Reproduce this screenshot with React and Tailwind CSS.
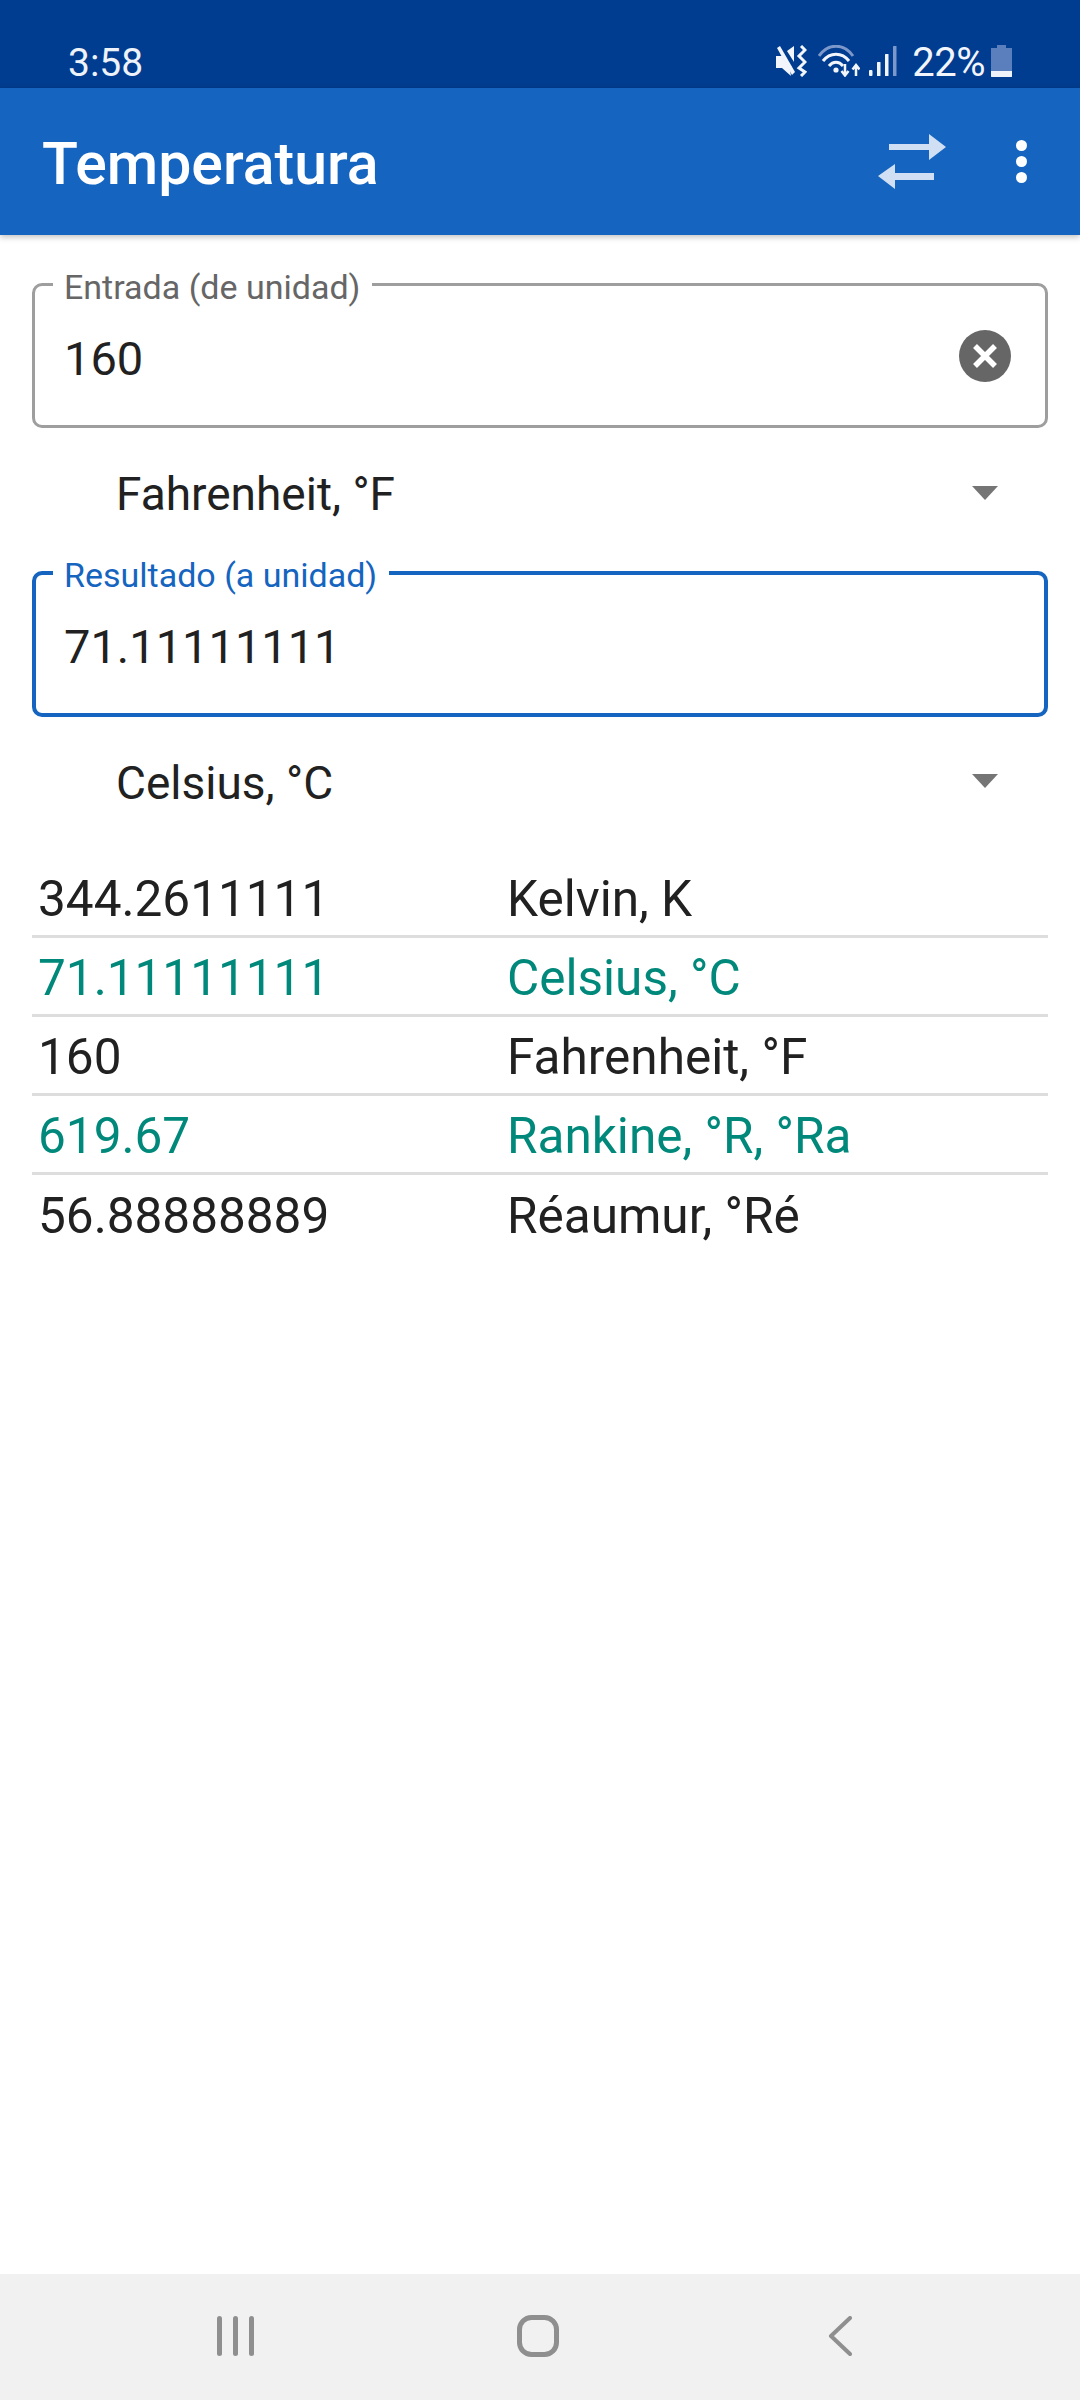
import React from "react";

const rows = [
  { value: "344.2611111", unit: "Kelvin, K" },
  { value: "71.11111111", unit: "Celsius, °C", accent: true },
  { value: "160", unit: "Fahrenheit, °F" },
  { value: "619.67", unit: "Rankine, °R, °Ra", accent: true },
  { value: "56.88888889", unit: "Réaumur, °Ré" },
];

const StatusIcons = () => (
  <div className="flex items-center">
    {/* mute + vibrate off */}
    <svg width="31" height="32" viewBox="0 0 31 32" className="mb-[4px]">
      <path d="M1 3 L4 1 L19 27 L16 30 Z" fill="#f2f5fb" />
      <path d="M0 11 H6 L14 25 L15 31 L6 23 H0 Z" fill="#f2f5fb" />
      <path d="M11 6 L18 1 V17 Z" fill="#f2f5fb" />
      <path d="M25 1 L29 5 L23 11 L29 17 L23 23 L29 27 L25 31" fill="none" stroke="#f2f5fb" strokeWidth="3" />
    </svg>
    {/* wifi */}
    <svg width="42" height="32" viewBox="0 0 42 32" className="mb-[4px] ml-[11px]">
      <path d="M1 11 C10 -2 26 -2 35 11" fill="none" stroke="#7c97c9" strokeWidth="3" />
      <path d="M5 16 C12 7 24 7 31 16" fill="none" stroke="#f2f5fb" strokeWidth="3" />
      <path d="M11 21 C15 16 21 16 25 21" fill="none" stroke="#f2f5fb" strokeWidth="3" />
      <circle cx="18" cy="25" r="2.6" fill="#f2f5fb" />
      <path d="M27 19 V29 M23.5 26 L27 30.5 L30.5 26" fill="none" stroke="#f2f5fb" strokeWidth="2.5" />
      <path d="M38 31 V21 M34.5 24.5 L38 20 L41.5 24.5" fill="none" stroke="#f2f5fb" strokeWidth="2.5" />
    </svg>
    {/* signal */}
    <svg width="28" height="32" viewBox="0 0 28 32" className="mb-[4px] ml-[9px]">
      <rect x="0" y="25" width="3.5" height="6" rx="1" fill="#f2f5fb" />
      <rect x="8" y="17" width="3.5" height="14" rx="0.5" fill="#f2f5fb" />
      <rect x="16" y="9" width="3.5" height="22" rx="0.5" fill="#f2f5fb" />
      <rect x="24" y="1" width="3.5" height="30" rx="0.5" fill="#7c97c9" />
    </svg>
    <span className="ml-[15px] text-[40px] leading-none tracking-[-0.5px] text-[#f2f5fb]">22%</span>
    {/* battery */}
    <svg width="21" height="32" viewBox="0 0 21 32" className="mb-[4px] ml-[6px]">
      <path d="M6 0 H15 V3 H21 V32 H0 V3 H6 Z" fill="#5b7fbd" />
      <path d="M0 26 H21 V31 C21 31.6 20.6 32 20 32 H1 C0.4 32 0 31.6 0 31 Z" fill="#eef2f9" />
    </svg>
  </div>
);

const Caret = () => (
  <svg width="26" height="14" viewBox="0 0 26 14" className="mb-[3px] mr-[50px]">
    <path d="M0 0 H26 L13 14 Z" fill="#757575" />
  </svg>
);

const UnitSelect = ({ label, height }) => (
  <div className={`flex items-center justify-between pb-[11px] pl-[84px] ${height}`}>
    <span className="text-[46px] leading-none text-[#212121]">{label}</span>
    <Caret />
  </div>
);

export default function App() {
  return (
    <div
      className="flex h-[2400px] w-[1080px] flex-col bg-white"
      style={{ fontFamily: "Roboto, sans-serif" }}
    >
      {/* status bar */}
      <div className="flex h-[88px] items-end justify-between bg-[#003c8f] pb-[5px] pl-[68px] pr-[68px]">
        <span className="text-[39px] leading-none text-[#eef2f9]">3:58</span>
        <StatusIcons />
      </div>

      {/* app bar */}
      <div className="flex h-[147px] items-center justify-between bg-[#1565c0] pl-[42px] pr-[53px] shadow-[0_2px_6px_rgba(0,0,0,0.25)]">
        <span className="mt-[3px] text-[59px] font-medium leading-none text-white">Temperatura</span>
        <div className="flex items-center gap-[70px]">
          <svg width="68" height="55" viewBox="0 0 68 55" fill="#d0dff4">
            <path d="M11 10 H51 V0 L68 13 L51 26 V16 H11 Z" />
            <path d="M56 39 H17 V30 L0 42 L17 55 V46 H56 Z" />
          </svg>
          <div className="flex flex-col gap-[5px]">
            <div className="h-[11px] w-[11px] rounded-full bg-white" />
            <div className="h-[11px] w-[11px] rounded-full bg-white" />
            <div className="h-[11px] w-[11px] rounded-full bg-white" />
          </div>
        </div>
      </div>

      <div className="flex flex-1 flex-col px-8 pt-12">
        {/* input field */}
        <div className="relative flex h-[145px] items-center justify-between rounded-[10px] border-[3px] border-[#9e9e9e] pl-[29px] pr-[34px]">
          <span className="absolute left-[18px] top-[-21px] bg-white pl-[11px] pr-[12px] text-[34px] leading-[44px] text-[#666666]">
            Entrada (de unidad)
          </span>
          <span className="mt-[6px] text-[47px] leading-none text-[#212121]">160</span>
          <svg width="52" height="52" viewBox="0 0 52 52">
            <circle cx="26" cy="26" r="26" fill="#666666" />
            <path d="M16 16 L36 36 M36 16 L16 36" stroke="#fff" strokeWidth="5.5" />
          </svg>
        </div>

        <UnitSelect label="Fahrenheit, °F" height="h-[143px]" />

        {/* result field */}
        <div className="relative flex h-[146px] items-center rounded-[10px] border-4 border-[#1565c0] pl-[28px]">
          <span className="absolute left-[17px] top-[-22px] bg-white pl-[11px] pr-[12px] text-[34px] leading-[44px] text-[#1565c0]">
            Resultado (a unidad)
          </span>
          <span className="mt-[4px] text-[47px] leading-none text-[#212121]">71.11111111</span>
        </div>

        <UnitSelect label="Celsius, °C" height="h-[142px]" />

        {/* conversions */}
        <div className="flex flex-col">
          {rows.map((row, idx) => (
            <div
              key={row.unit}
              className={`flex h-[79px] items-center pt-[5px] text-[49.5px] leading-none ${
                idx < rows.length - 1 ? "border-b-[3px] border-[#dddddd]" : ""
              } ${row.accent ? "text-[#00897b]" : "text-[#212121]"}`}
            >
              <span className="w-[475px] pl-[6px]">{row.value}</span>
              <span>{row.unit}</span>
            </div>
          ))}
        </div>
      </div>

      {/* nav bar */}
      <div className="flex h-[126px] items-center bg-[#f1f1f1] pb-[2px] pl-[217px]">
        <svg width="38" height="40" viewBox="0 0 38 40" fill="#8f8f8f">
          <rect x="0" y="0" width="5" height="40" rx="2.5" />
          <rect x="16" y="0" width="5" height="40" rx="2.5" />
          <rect x="32" y="0" width="5" height="40" rx="2.5" />
        </svg>
        <svg width="42" height="42" viewBox="0 0 42 42" fill="none" className="ml-[262px]">
          <rect x="2.5" y="2.5" width="37" height="37" rx="12" stroke="#8f8f8f" strokeWidth="5" />
        </svg>
        <svg width="24" height="40" viewBox="0 0 24 40" fill="none" className="ml-[269px]">
          <path d="M22 2 L3 20 L22 38" stroke="#8f8f8f" strokeWidth="4" strokeLinecap="round" strokeLinejoin="round" />
        </svg>
      </div>
    </div>
  );
}
